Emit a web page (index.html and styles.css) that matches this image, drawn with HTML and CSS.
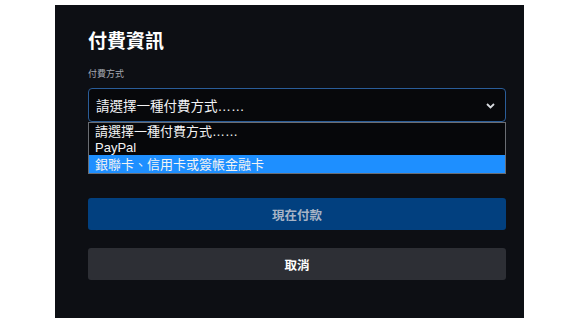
FILE: index.html
```html
<!DOCTYPE html>
<html>
<head>
    <meta name="viewport" content="width=device-width, initial-scale=1.0">
    <title>付費資訊</title>
    <link rel="stylesheet" href="styles.css">
</head>
<body>
    <div class="payment-panel">
        <h1>付費資訊</h1>

        <div class="field">
            <label>付費方式</label>
            <div class="select-wrap">
                <div class="select-box">
                    <span>請選擇一種付費方式……</span>
                    <svg class="chevron" width="9" height="6" viewBox="0 0 9 6">
                        <path d="M1 1l3.5 3.5L8 1" fill="none" stroke="#d8dbe0" stroke-width="1.8"/>
                    </svg>
                </div>
                <ul class="dropdown">
                    <li>請選擇一種付費方式……</li>
                    <li>PayPal</li>
                    <li class="active">銀聯卡、信用卡或簽帳金融卡</li>
                </ul>
            </div>
        </div>

        <div class="button-group">
            <button class="btn pay-btn">現在付款</button>
            <button class="btn cancel-btn">取消</button>
        </div>
    </div>
</body>
</html>
```

FILE: styles.css
```css
* {
    box-sizing: border-box;
    margin: 0;
    padding: 0;
}

body {
    background-color: #ffffff;
    font-family: "Noto Sans CJK TC", "Noto Sans", sans-serif;
}

.payment-panel {
    width: 469px;
    height: 313px;
    margin: 5px 0 0 55px;
    padding: 21px 18px 0 33px;
    background-color: #0d0f14;
    color: #fff;
}

h1 {
    font-size: 19px;
    font-weight: bold;
    line-height: 28px;
    margin-bottom: 13px;
}

.field label {
    display: block;
    font-size: 9px;
    line-height: 14px;
    color: #a4a8b0;
    margin-bottom: 7px;
}

.select-wrap {
    position: relative;
}

.select-box {
    display: flex;
    align-items: center;
    justify-content: space-between;
    height: 34px;
    padding: 0 10px 0 7px;
    border: 1px solid #2a5d99;
    border-radius: 4px;
    background-color: #07080b;
    font-family: "Liberation Sans", "Noto Sans CJK TC", sans-serif;
    font-size: 13.5px;
    color: #f2f3f5;
}

.chevron {
    margin-top: 1px;
}

/* 展開的下拉清單 */
.dropdown {
    position: absolute;
    left: 0;
    right: 0;
    top: 34px;
    list-style: none;
    background-color: #06070a;
    border: 1px solid #6a6d73;
    font-family: "Liberation Sans", "Noto Sans CJK TC", sans-serif;
    font-size: 13px;
    line-height: 15px;
    color: #f4f4f4;
    z-index: 2;
}

.dropdown li {
    padding: 1px 6px 0 6px;
    height: 16px;
}

.dropdown li.active {
    background-color: #1e8fff;
    height: 18px;
    padding-top: 2px;
}

.button-group {
    display: flex;
    flex-direction: column;
    gap: 18px;
    margin-top: 76px;
}

.btn {
    height: 32px;
    border: none;
    border-radius: 3px;
    font-family: "Noto Sans CJK TC", sans-serif;
    font-size: 12.5px;
    font-weight: bold;
}

.pay-btn {
    background-color: #02407f;
    color: #a7b4c6;
}

.cancel-btn {
    background-color: #2d2f35;
    color: #ffffff;
}
```
